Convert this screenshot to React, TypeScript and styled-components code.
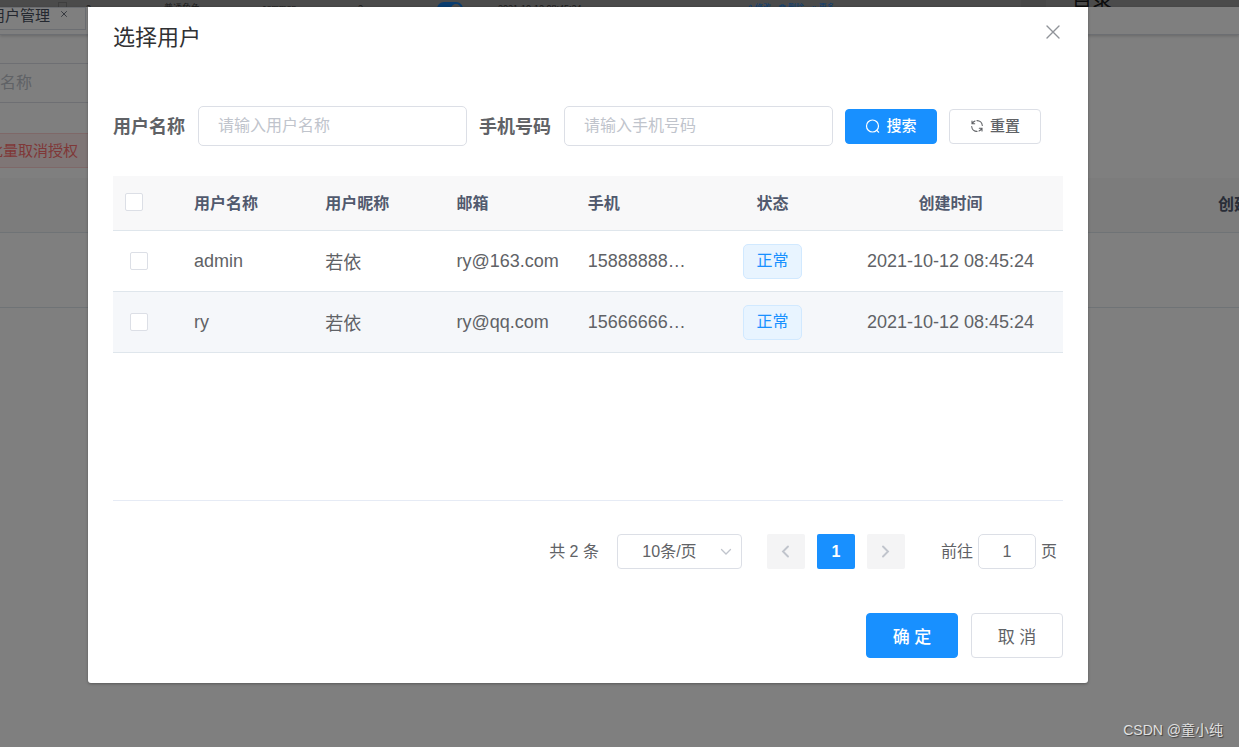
import React, { useState } from "react";
import styled, { createGlobalStyle, css } from "styled-components";

const GlobalStyle = createGlobalStyle`
  *, *::before, *::after { box-sizing: border-box; }
  body {
    margin: 0;
    background: #808080;
    color: #606266;
    font-family: "Liberation Sans", "Noto Sans CJK SC", sans-serif;
    font-size: 16px;
  }
  button, input, select { font: inherit; color: inherit; margin: 0; }
`;

const Page = styled.div`
  display: flex;
  flex-direction: column;
  min-height: 100vh;
  overflow: hidden;
`;

/* Slice of the previous list that stays visible above the window */
const Strip = styled.div`
  display: flex;
  align-items: flex-end;
  height: 7px;
  flex: none;
  overflow: hidden;
  background: #4b4b4b;
  color: #1c1c1c;
  font-size: 9px;
  line-height: 12px;
`;

const StripCell = styled.span<{ $width: number; $dark?: boolean }>`
  width: ${(p) => p.$width}px;
  flex: none;
  height: ${(p) => (p.$dark ? 7 : 5)}px;
  background: ${(p) => (p.$dark ? "#474747" : "none")};
  white-space: nowrap;
`;

const StripActions = styled(StripCell)`
  display: flex;
  gap: 8px;
  color: #0b3f73;
  font-size: 8px;
`;

const StripAction = styled.span`
  display: flex;
  gap: 2px;
  height: 12px;
  align-items: center;
`;

const StripHeading = styled.span`
  height: 17px;
  font-size: 20px;
  line-height: 20px;
  color: #0c0c0c;
`;

const StripBox = styled.span`
  display: block;
  width: 9px;
  height: 9px;
  border: 1px solid #3e3e3e;
`;

const StripSwitch = styled.span`
  display: flex;
  justify-content: flex-end;
  width: 26px;
  height: 14px;
  padding: 2px;
  border-radius: 7px;
  background: #0a3d70;

  &::after {
    content: "";
    width: 10px;
    height: 10px;
    border-radius: 50%;
    background: #4b4b4b;
  }
`;

const Stage = styled.div`
  position: relative;
  flex: 1;
  background: #fff;
`;

const TabBar = styled.div`
  display: flex;
  height: 28px;
  border-bottom: 1px solid #d8dce5;
  box-shadow: 0 1px 3px rgba(0, 0, 0, 0.2);
  overflow: hidden;
`;

const Tab = styled.div`
  display: flex;
  align-items: center;
  justify-content: space-between;
  width: 86px;
  height: 23px;
  padding: 0 18px 9px 0;
  border: 1px solid #d8dce5;
  border-left: 0;
  color: #495060;
  font-size: 15px;
  white-space: nowrap;
`;

const TabLabel = styled.span`
  display: flex;
  justify-content: flex-end;
  width: 50px;
  overflow: hidden;
`;

const BackField = styled.div`
  width: 200px;
  height: 40px;
  margin-top: 28px;
  border: solid #dcdfe6;
  border-width: 1px 1px 1px 0;
  color: #c0c4cc;
  line-height: 38px;
`;

const BackAction = styled.div`
  display: flex;
  justify-content: flex-end;
  width: 88px;
  height: 35px;
  margin-top: 30px;
  padding-right: 10px;
  border: solid #ffd0d0;
  border-width: 1px 0;
  background: #ffeded;
  color: #ff7070;
  font-size: 15px;
  line-height: 33px;
  white-space: nowrap;
`;

const BackHead = styled.div`
  display: flex;
  justify-content: flex-end;
  height: 55px;
  margin-top: 10px;
  border-bottom: 1px solid #dfe6ec;
  background: #f8f8f9;
  color: #515a6e;
  font-weight: 700;
  line-height: 54px;
`;

const BackHeadLabel = styled.span`
  width: 21px;
  overflow: hidden;
  white-space: nowrap;
`;

const BackRow = styled.div`
  height: 75px;
  border-bottom: 1px solid #dfe6ec;
`;

const Mask = styled.div`
  position: absolute;
  inset: 0;
  padding: 0 151px 0 88px;
  background: rgba(0, 0, 0, 0.5);
`;

const Dialog = styled.section`
  padding: 0 25px 25px;
  border-radius: 0 0 3px 3px;
  background: #fff;
  box-shadow: 0 1px 3px rgba(0, 0, 0, 0.3);
`;

const DialogHeader = styled.header`
  display: flex;
  align-items: center;
  justify-content: space-between;
  height: 56px;
`;

const Title = styled.h2`
  margin: 0;
  color: #303133;
  font-size: 22px;
  font-weight: 400;
`;

const CloseButton = styled.button`
  display: flex;
  justify-content: center;
  width: 20px;
  height: 20px;
  padding: 0;
  border: 0;
  background: none;
  color: #909399;
  cursor: pointer;
`;

const SearchForm = styled.form`
  display: flex;
  align-items: center;
  gap: 12px;
  margin-top: 43px;
`;

const Field = styled.label`
  display: flex;
  align-items: center;
  gap: 13px;
  font-size: 18px;
  font-weight: 700;
  white-space: nowrap;
`;

const LabelText = styled.span`
  padding-bottom: 3px;
`;

const TextInput = styled.input`
  width: 269px;
  height: 40px;
  padding: 0 19px 1px;
  border: 1px solid #dcdfe6;
  border-radius: 5px;
  outline: none;
  background: #fff;
  font-size: 16px;
  font-weight: 400;

  &::placeholder { color: #c0c4cc; opacity: 1; }
`;

const Button = styled.button<{ $primary?: boolean; $large?: boolean }>`
  display: flex;
  align-items: center;
  justify-content: center;
  gap: 6px;
  border: 1px solid #dcdfe6;
  border-radius: 4px;
  padding: 0;
  background: #fff;
  white-space: nowrap;
  cursor: pointer;
  ${(p) =>
    p.$large
      ? css`width: 92px; height: 45px; font-size: 17px;`
      : css`width: 92px; height: 35px; font-size: 15px; font-weight: 500;`}
  ${(p) =>
    p.$primary &&
    css`border-color: #1890ff; background: #1890ff; color: #fff; font-weight: 500;`}
`;

const TableArea = styled.div`
  height: 325px;
  margin-top: 30px;
  border-bottom: 1px solid #e6ebf5;
`;

const Table = styled.table`
  width: 100%;
  table-layout: fixed;
  border-collapse: separate;
  border-spacing: 0;
`;

const HeadCell = styled.th<{ $center?: boolean }>`
  height: 55px;
  padding: 0 12px 2px;
  border-bottom: 1px solid #dfe6ec;
  background: #f8f8f9;
  color: #515a6e;
  font-size: 16px;
  text-align: ${(p) => (p.$center ? "center" : "left")};
`;

const Row = styled.tr<{ $active?: boolean }>`
  background: ${(p) => (p.$active ? "#f5f7fa" : "#fff")};
`;

const Cell = styled.td<{ $center?: boolean }>`
  height: 61px;
  padding: 0 12px;
  border-bottom: 1px solid #dfe6ec;
  overflow: hidden;
  font-size: 18px;
  text-align: ${(p) => (p.$center ? "center" : "left")};
  text-overflow: ellipsis;
  white-space: nowrap;
`;

const CheckBox = styled.input`
  appearance: none;
  display: block;
  width: 18px;
  height: 18px;
  border: 1px solid #dcdfe6;
  border-radius: 2px;
  background: #fff;

  td & { margin-left: 5px; }
  &:checked { border-color: #1890ff; background: #1890ff; }
`;

const Tag = styled.span`
  display: inline-block;
  height: 35px;
  padding: 0 12px;
  border: 1px solid #d1e9ff;
  border-radius: 5px;
  background: #e8f4ff;
  color: #1890ff;
  font-size: 16px;
  line-height: 31px;
  vertical-align: middle;
`;

const Pagination = styled.nav`
  display: flex;
  align-items: center;
  justify-content: flex-end;
  margin-top: 33px;
  padding-right: 6px;
`;

const Total = styled(LabelText)`
  margin-right: 18px;
`;

const SizePicker = styled.div`
  position: relative;
  margin-right: 25px;
`;

const Select = styled.select`
  appearance: none;
  display: block;
  width: 125px;
  height: 35px;
  padding: 0 20px 1px 0;
  border: 1px solid #dcdfe6;
  border-radius: 4px;
  background: #fff;
  text-align: center;
  text-align-last: center;
`;

const SelectArrow = styled.svg`
  position: absolute;
  top: 12px;
  right: 10px;
  pointer-events: none;
`;

const Pager = styled.div`
  display: flex;
  gap: 12px;
`;

const PageButton = styled.button<{ $current?: boolean }>`
  display: flex;
  align-items: center;
  justify-content: center;
  width: 38px;
  height: 35px;
  padding: 0;
  border: 0;
  border-radius: 2px;
  background: ${(p) => (p.$current ? "#1890ff" : "#f4f4f5")};
  color: ${(p) => (p.$current ? "#fff" : "#c0c4cc")};
  font-weight: 700;
`;

const Jump = styled.label`
  display: flex;
  align-items: center;
  gap: 5px;
  margin-left: 36px;
`;

const JumpInput = styled.input`
  width: 58px;
  height: 35px;
  padding: 0;
  border: 1px solid #dcdfe6;
  border-radius: 5px;
  background: #fff;
  text-align: center;
`;

const DialogFooter = styled.footer`
  display: flex;
  justify-content: flex-end;
  gap: 13px;
  margin-top: 44px;
`;

const Watermark = styled.span`
  position: absolute;
  right: 16px;
  bottom: 8px;
  color: #e0e0e0;
  font-size: 14px;
  text-shadow: 1px 1px 1px rgba(0, 0, 0, 0.5);
`;

const strokeProps = {
  fill: "none",
  stroke: "currentColor",
  strokeLinecap: "round" as const,
};

const CloseIcon = () => (
  <svg width="14" height="14" viewBox="0 0 14 14" {...strokeProps} strokeWidth="1.4">
    <path d="M1 1l12 12M13 1L1 13" />
  </svg>
);

const SearchIcon = () => (
  <svg width="15" height="15" viewBox="0 0 15 15" {...strokeProps} strokeWidth="1.2">
    <circle cx="7.500" cy="7" r="6" />
    <path d="M11.800 11.400l1.900 1.800" />
  </svg>
);

const RefreshIcon = () => (
  <svg width="14" height="14" viewBox="0 0 14 14" {...strokeProps} strokeWidth="1.1">
    <path d="M2 2v2.700h2.700M2.300 4.500A5.300 5.300 0 0 1 5 2M7 1.600A5.300 5.300 0 0 1 12.300 6.500M12 12V9.300H9.300M11.700 9.500A5.300 5.300 0 0 1 9 12M7 12.400A5.300 5.300 0 0 1 1.700 7.500" />
  </svg>
);

const Chevron = ({ flip }: { flip?: boolean }) => (
  <svg width="9" height="13" viewBox="0 0 9 13" {...strokeProps} strokeWidth="1.9">
    <path d={flip ? "M2 1.5l5 5-5 5" : "M7 1.5l-5 5 5 5"} />
  </svg>
);

const PencilIcon = () => (
  <svg width="7" height="8" viewBox="0 0 7 8" {...strokeProps} strokeWidth="0.8">
    <path d="M1 6l3.500-5L6 2 2.500 6.500zM1 7.500h5" />
  </svg>
);

const TrashIcon = () => (
  <svg width="7" height="8" viewBox="0 0 7 8" {...strokeProps} strokeWidth="0.8">
    <path d="M.5 2h6M2.300 2V.8h2.400V2M1.200 2v5.500h4.600V2" />
  </svg>
);

const users = [
  { id: 1, name: "admin", nick: "若依", email: "ry@163.com", phone: "15888888888" },
  { id: 2, name: "ry", nick: "若依", email: "ry@qq.com", phone: "15666666666" },
];

export default function App() {
  const [selected, setSelected] = useState<number[]>([]);
  const toggle = (id: number) =>
    setSelected((s) => (s.includes(id) ? s.filter((x) => x !== id) : [...s, id]));
  const all = selected.length === users.length;

  return (
    <>
      <GlobalStyle />
      <Page>
        <Strip aria-hidden="true">
          <StripCell $width={58} />
          <StripCell $width={28}><StripBox /></StripCell>
          <StripCell $width={78}>2</StripCell>
          <StripCell $width={98}>普通角色</StripCell>
          <StripCell $width={96}>common</StripCell>
          <StripCell $width={79}>2</StripCell>
          <StripCell $width={61}><StripSwitch /></StripCell>
          <StripCell $width={248}>2021-10-12 08:45:24</StripCell>
          <StripActions $width={275}>
            <StripAction><PencilIcon />修改</StripAction>
            <StripAction><TrashIcon />删除</StripAction>
            <StripAction>» 更多</StripAction>
          </StripActions>
          <StripCell $width={25} $dark />
          <StripCell $width={26} />
          <StripHeading>目录</StripHeading>
        </Strip>
        <Stage>
          <div aria-hidden="true">
            <TabBar>
              <Tab>
                <TabLabel>用户管理</TabLabel>
                <svg width="6" height="6" viewBox="0 0 6 6" {...strokeProps} strokeWidth="0.8">
                  <path d="M.5.5l5 5M5.5.5l-5 5" />
                </svg>
              </Tab>
            </TabBar>
            <BackField>名称</BackField>
            <BackAction>批量取消授权</BackAction>
            <BackHead><BackHeadLabel>创建时间</BackHeadLabel></BackHead>
            <BackRow />
          </div>
          <Mask>
            <Dialog role="dialog" aria-labelledby="dialog-title">
              <DialogHeader>
                <Title id="dialog-title">选择用户</Title>
                <CloseButton type="button" aria-label="关闭"><CloseIcon /></CloseButton>
              </DialogHeader>
              <SearchForm onSubmit={(e) => e.preventDefault()}>
                <Field><LabelText>用户名称</LabelText><TextInput placeholder="请输入用户名称" /></Field>
                <Field><LabelText>手机号码</LabelText><TextInput placeholder="请输入手机号码" /></Field>
                <Button $primary type="submit"><SearchIcon /><LabelText>搜索</LabelText></Button>
                <Button type="reset"><RefreshIcon /><LabelText>重置</LabelText></Button>
              </SearchForm>
              <TableArea>
                <Table>
                  <colgroup>
                    <col style={{ width: 69 }} />
                    <col /><col /><col /><col />
                    <col style={{ width: 131 }} />
                    <col style={{ width: 225 }} />
                  </colgroup>
                  <thead>
                    <tr>
                      <HeadCell>
                        <CheckBox
                          type="checkbox"
                          aria-label="全选"
                          checked={all}
                          onChange={() => setSelected(all ? [] : users.map((u) => u.id))}
                        />
                      </HeadCell>
                      <HeadCell>用户名称</HeadCell>
                      <HeadCell>用户昵称</HeadCell>
                      <HeadCell>邮箱</HeadCell>
                      <HeadCell>手机</HeadCell>
                      <HeadCell $center>状态</HeadCell>
                      <HeadCell $center>创建时间</HeadCell>
                    </tr>
                  </thead>
                  <tbody>
                    {users.map((u, i) => (
                      <Row key={u.id} $active={i === 1}>
                        <Cell>
                          <CheckBox
                            type="checkbox"
                            aria-label={u.name}
                            checked={selected.includes(u.id)}
                            onChange={() => toggle(u.id)}
                          />
                        </Cell>
                        <Cell>{u.name}</Cell>
                        <Cell>{u.nick}</Cell>
                        <Cell>{u.email}</Cell>
                        <Cell>{u.phone}</Cell>
                        <Cell $center><Tag>正常</Tag></Cell>
                        <Cell $center>2021-10-12 08:45:24</Cell>
                      </Row>
                    ))}
                  </tbody>
                </Table>
              </TableArea>
              <Pagination aria-label="分页">
                <Total>共 2 条</Total>
                <SizePicker>
                  <Select aria-label="每页条数"><option>10条/页</option></Select>
                  <SelectArrow width="12" height="12" viewBox="0 0 12 12" fill="none" stroke="#c0c4cc" strokeWidth="1.3" strokeLinecap="round">
                    <path d="M1.5 3.5L6 8l4.500-4.500" />
                  </SelectArrow>
                </SizePicker>
                <Pager>
                  <PageButton type="button" aria-label="上一页" disabled><Chevron /></PageButton>
                  <PageButton type="button" $current>1</PageButton>
                  <PageButton type="button" aria-label="下一页" disabled><Chevron flip /></PageButton>
                </Pager>
                <Jump>
                  <LabelText>前往</LabelText>
                  <JumpInput defaultValue="1" />
                  <LabelText>页</LabelText>
                </Jump>
              </Pagination>
              <DialogFooter>
                <Button $primary $large type="button">确 定</Button>
                <Button $large type="button">取 消</Button>
              </DialogFooter>
            </Dialog>
          </Mask>
          <Watermark>CSDN @童小纯</Watermark>
        </Stage>
      </Page>
    </>
  );
}
